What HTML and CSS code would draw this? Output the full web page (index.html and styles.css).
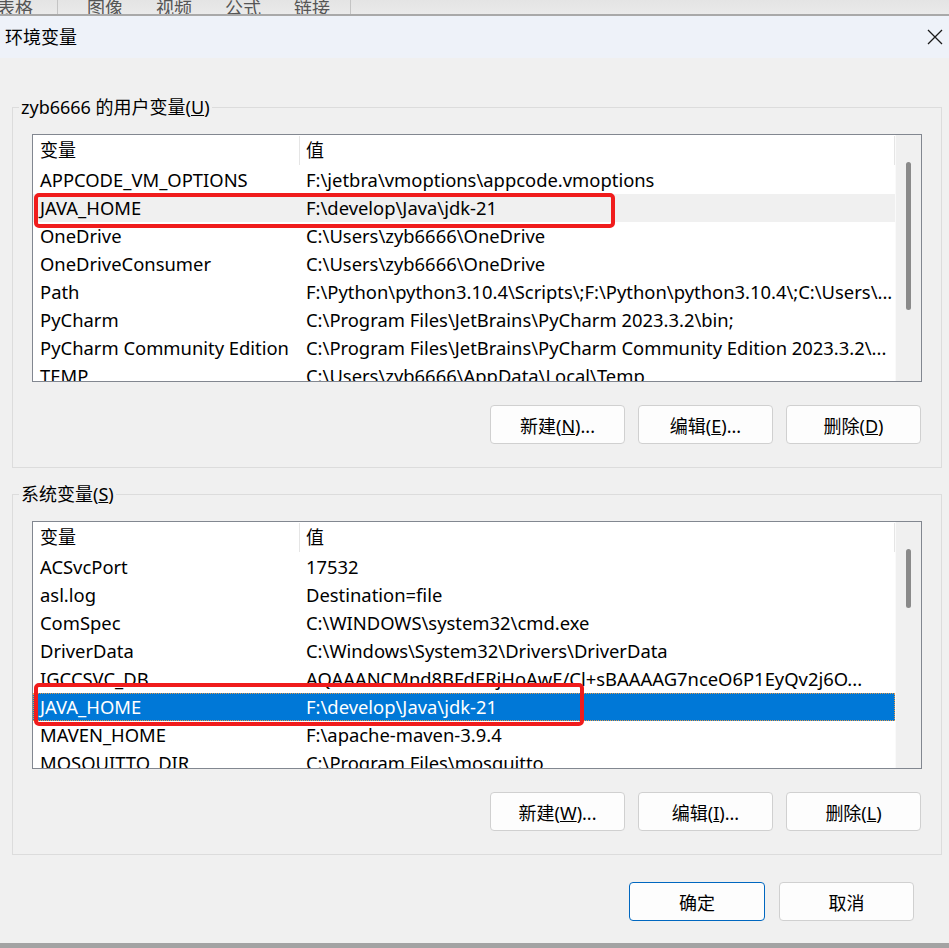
FILE: index.html
```html
<!DOCTYPE html>
<html lang="zh-CN">
<head>
    <meta charset="UTF-8">
    <title>环境变量</title>
    <link rel="stylesheet" href="styles.css">
</head>
<body>
    <!-- bande de l'application derrière -->
    <div class="strip">
        <span class="tab first">表格</span>
        <span class="sep"></span>
        <span class="tab">图像</span>
        <span class="tab">视频</span>
        <span class="tab">公式</span>
        <span class="tab">链接</span>
        <span class="sep last"></span>
    </div>

    <div class="dialog">
        <div class="titlebar">
            <span class="title">环境变量</span>
            <svg class="close" width="16" height="16" viewBox="0 0 16 16">
                <path d="M1 1 L15 15 M15 1 L1 15" stroke="#1a1a1a" stroke-width="1.3" fill="none"/>
            </svg>
        </div>

        <div class="content">
            <fieldset class="group">
                <legend>zyb6666 的用户变量(<u>U</u>)</legend>
                <div class="listbox">
                    <div class="list-body">
                        <div class="row head">
                            <div class="cell">变量</div>
                            <div class="cell">值</div>
                        </div>
                        <div class="row"><div class="cell">APPCODE_VM_OPTIONS</div><div class="cell">F:\jetbra\vmoptions\appcode.vmoptions</div></div>
                        <div class="row hover"><div class="cell">JAVA_HOME</div><div class="cell">F:\develop\Java\jdk-21</div></div>
                        <div class="row"><div class="cell">OneDrive</div><div class="cell">C:\Users\zyb6666\OneDrive</div></div>
                        <div class="row"><div class="cell">OneDriveConsumer</div><div class="cell">C:\Users\zyb6666\OneDrive</div></div>
                        <div class="row"><div class="cell">Path</div><div class="cell">F:\Python\python3.10.4\Scripts\;F:\Python\python3.10.4\;C:\Users\...</div></div>
                        <div class="row"><div class="cell">PyCharm</div><div class="cell">C:\Program Files\JetBrains\PyCharm 2023.3.2\bin;</div></div>
                        <div class="row"><div class="cell">PyCharm Community Edition</div><div class="cell">C:\Program Files\JetBrains\PyCharm Community Edition 2023.3.2\...</div></div>
                        <div class="row"><div class="cell">TEMP</div><div class="cell">C:\Users\zyb6666\AppData\Local\Temp</div></div>
                    </div>
                    <div class="scrollbar"><div class="thumb thumb-user"></div></div>
                    <div class="mark mark-user"></div>
                </div>
                <div class="buttons">
                    <button class="btn">新建(<u>N</u>)...</button>
                    <button class="btn">编辑(<u>E</u>)...</button>
                    <button class="btn">删除(<u>D</u>)</button>
                </div>
            </fieldset>

            <fieldset class="group">
                <legend>系统变量(<u>S</u>)</legend>
                <div class="listbox">
                    <div class="list-body">
                        <div class="row head">
                            <div class="cell">变量</div>
                            <div class="cell">值</div>
                        </div>
                        <div class="row"><div class="cell">ACSvcPort</div><div class="cell">17532</div></div>
                        <div class="row"><div class="cell">asl.log</div><div class="cell">Destination=file</div></div>
                        <div class="row"><div class="cell">ComSpec</div><div class="cell">C:\WINDOWS\system32\cmd.exe</div></div>
                        <div class="row"><div class="cell">DriverData</div><div class="cell">C:\Windows\System32\Drivers\DriverData</div></div>
                        <div class="row"><div class="cell">IGCCSVC_DB</div><div class="cell">AQAAANCMnd8BFdERjHoAwE/Cl+sBAAAAG7nceO6P1EyQv2j6O...</div></div>
                        <div class="row selected"><div class="cell">JAVA_HOME</div><div class="cell">F:\develop\Java\jdk-21</div></div>
                        <div class="row"><div class="cell">MAVEN_HOME</div><div class="cell">F:\apache-maven-3.9.4</div></div>
                        <div class="row"><div class="cell">MOSQUITTO_DIR</div><div class="cell">C:\Program Files\mosquitto</div></div>
                    </div>
                    <div class="scrollbar"><div class="thumb thumb-system"></div></div>
                    <div class="mark mark-system"></div>
                </div>
                <div class="buttons">
                    <button class="btn">新建(<u>W</u>)...</button>
                    <button class="btn">编辑(<u>I</u>)...</button>
                    <button class="btn">删除(<u>L</u>)</button>
                </div>
            </fieldset>

            <div class="footer">
                <button class="btn default">确定</button>
                <button class="btn">取消</button>
            </div>
        </div>
    </div>
    <div class="bottom-edge"></div>
</body>
</html>
```

FILE: styles.css
```css
body {
    margin: 0;
    width: 949px;
    height: 948px;
    overflow: hidden;
    font-family: "Noto Sans", "Noto Sans CJK SC", sans-serif;
    font-size: 18px;
    color: #000;
    background-color: #f0f0f0;
}

/* bande du haut */
.strip {
    height: 14px;
    display: flex;
    align-items: flex-end;
    overflow: hidden;
    background: linear-gradient(#e4e4e4, #eaeaea);
    border-bottom: 2px solid #a9a9a9;
    color: #555;
    line-height: 20px;
}

.tab {
    margin-bottom: -4px;
    margin-left: 33px;
}

.tab.first {
    margin-left: -3px;
}

.sep {
    width: 1px;
    height: 14px;
    background-color: #c4c4c4;
    margin-left: 24px;
    margin-right: -4px;
}

.sep.last {
    margin-left: 20px;
}

/* barre de titre */
.titlebar {
    height: 42px;
    display: flex;
    align-items: center;
    justify-content: space-between;
    padding: 0 6px 0 5px;
    background-color: #eef2f9;
}

.title {
    line-height: 42px;
}

/* contenu */
.content {
    height: 885px;
    padding-top: 37px;
    box-sizing: border-box;
    background-color: #f0f0f0;
}

.group {
    margin: 0 7px 14px 12px;
    padding: 15px 19px 23px 19px;
    border: 1px solid #dcdcdc;
    min-width: 0;
}

.group legend {
    margin-left: -13px;
    padding: 0 2px;
    line-height: 24px;
}

.listbox {
    position: relative;
    display: flex;
    height: 248px;
    box-sizing: border-box;
    border: 1px solid #828790;
    background-color: #fff;
}

.list-body {
    flex: 1;
    overflow: hidden;
}

.row {
    display: grid;
    grid-template-columns: 267px 1fr;
    height: 28px;
    line-height: 28px;
    white-space: nowrap;
    font-size: 18.4px;
}

.row .cell {
    overflow: hidden;
    text-overflow: ellipsis;
    padding-left: 7px;
}

.row .cell + .cell {
    padding-left: 6px;
}

.row.head {
    height: 31px;
    line-height: 31px;
    font-size: 18px;
}

.row.head .cell {
    border-right: 1px solid #e5e5e5;
    margin-top: 1px;
    height: 29px;
    line-height: 29px;
}

.row.hover {
    background-color: #f0f0f0;
}

.row.selected {
    background-color: #0078d7;
    color: #fff;
    outline: 1px dotted #e39a4a;
    outline-offset: -1px;
}

.scrollbar {
    width: 26px;
    padding: 27px 0 0 10px;
    box-sizing: border-box;
    background-color: #f0f0f0;
    border-left: 1px solid #fafafa;
}

.thumb {
    width: 5px;
    border-radius: 3px;
    background-color: #8a8a8a;
}

.thumb-user {
    height: 148px;
}

.thumb-system {
    height: 59px;
}

/* cadres rouges d'annotation */
.mark {
    position: absolute;
    left: 1px;
    border: 4px solid #f01c1c;
    border-radius: 5px;
    box-sizing: border-box;
}

.mark-user {
    top: 58px;
    width: 581px;
    height: 35px;
}

.mark-system {
    top: 161px;
    width: 550px;
    height: 43px;
}

/* boutons */
.buttons {
    display: flex;
    justify-content: flex-end;
    gap: 13px;
    margin-top: 23px;
    padding-right: 1px;
}

.btn {
    width: 135px;
    height: 39px;
    font-family: inherit;
    font-size: 18px;
    color: #000;
    background-color: #fdfdfd;
    border: 1px solid #d0d0d0;
    border-radius: 4px;
    padding: 0;
}

.btn.default {
    width: 136px;
    border-color: #0067c0;
}

.footer {
    display: flex;
    justify-content: flex-end;
    gap: 14px;
    margin-top: 27px;
    padding-right: 35px;
}

.bottom-edge {
    height: 5px;
    background-color: #a3a3a3;
}
```
